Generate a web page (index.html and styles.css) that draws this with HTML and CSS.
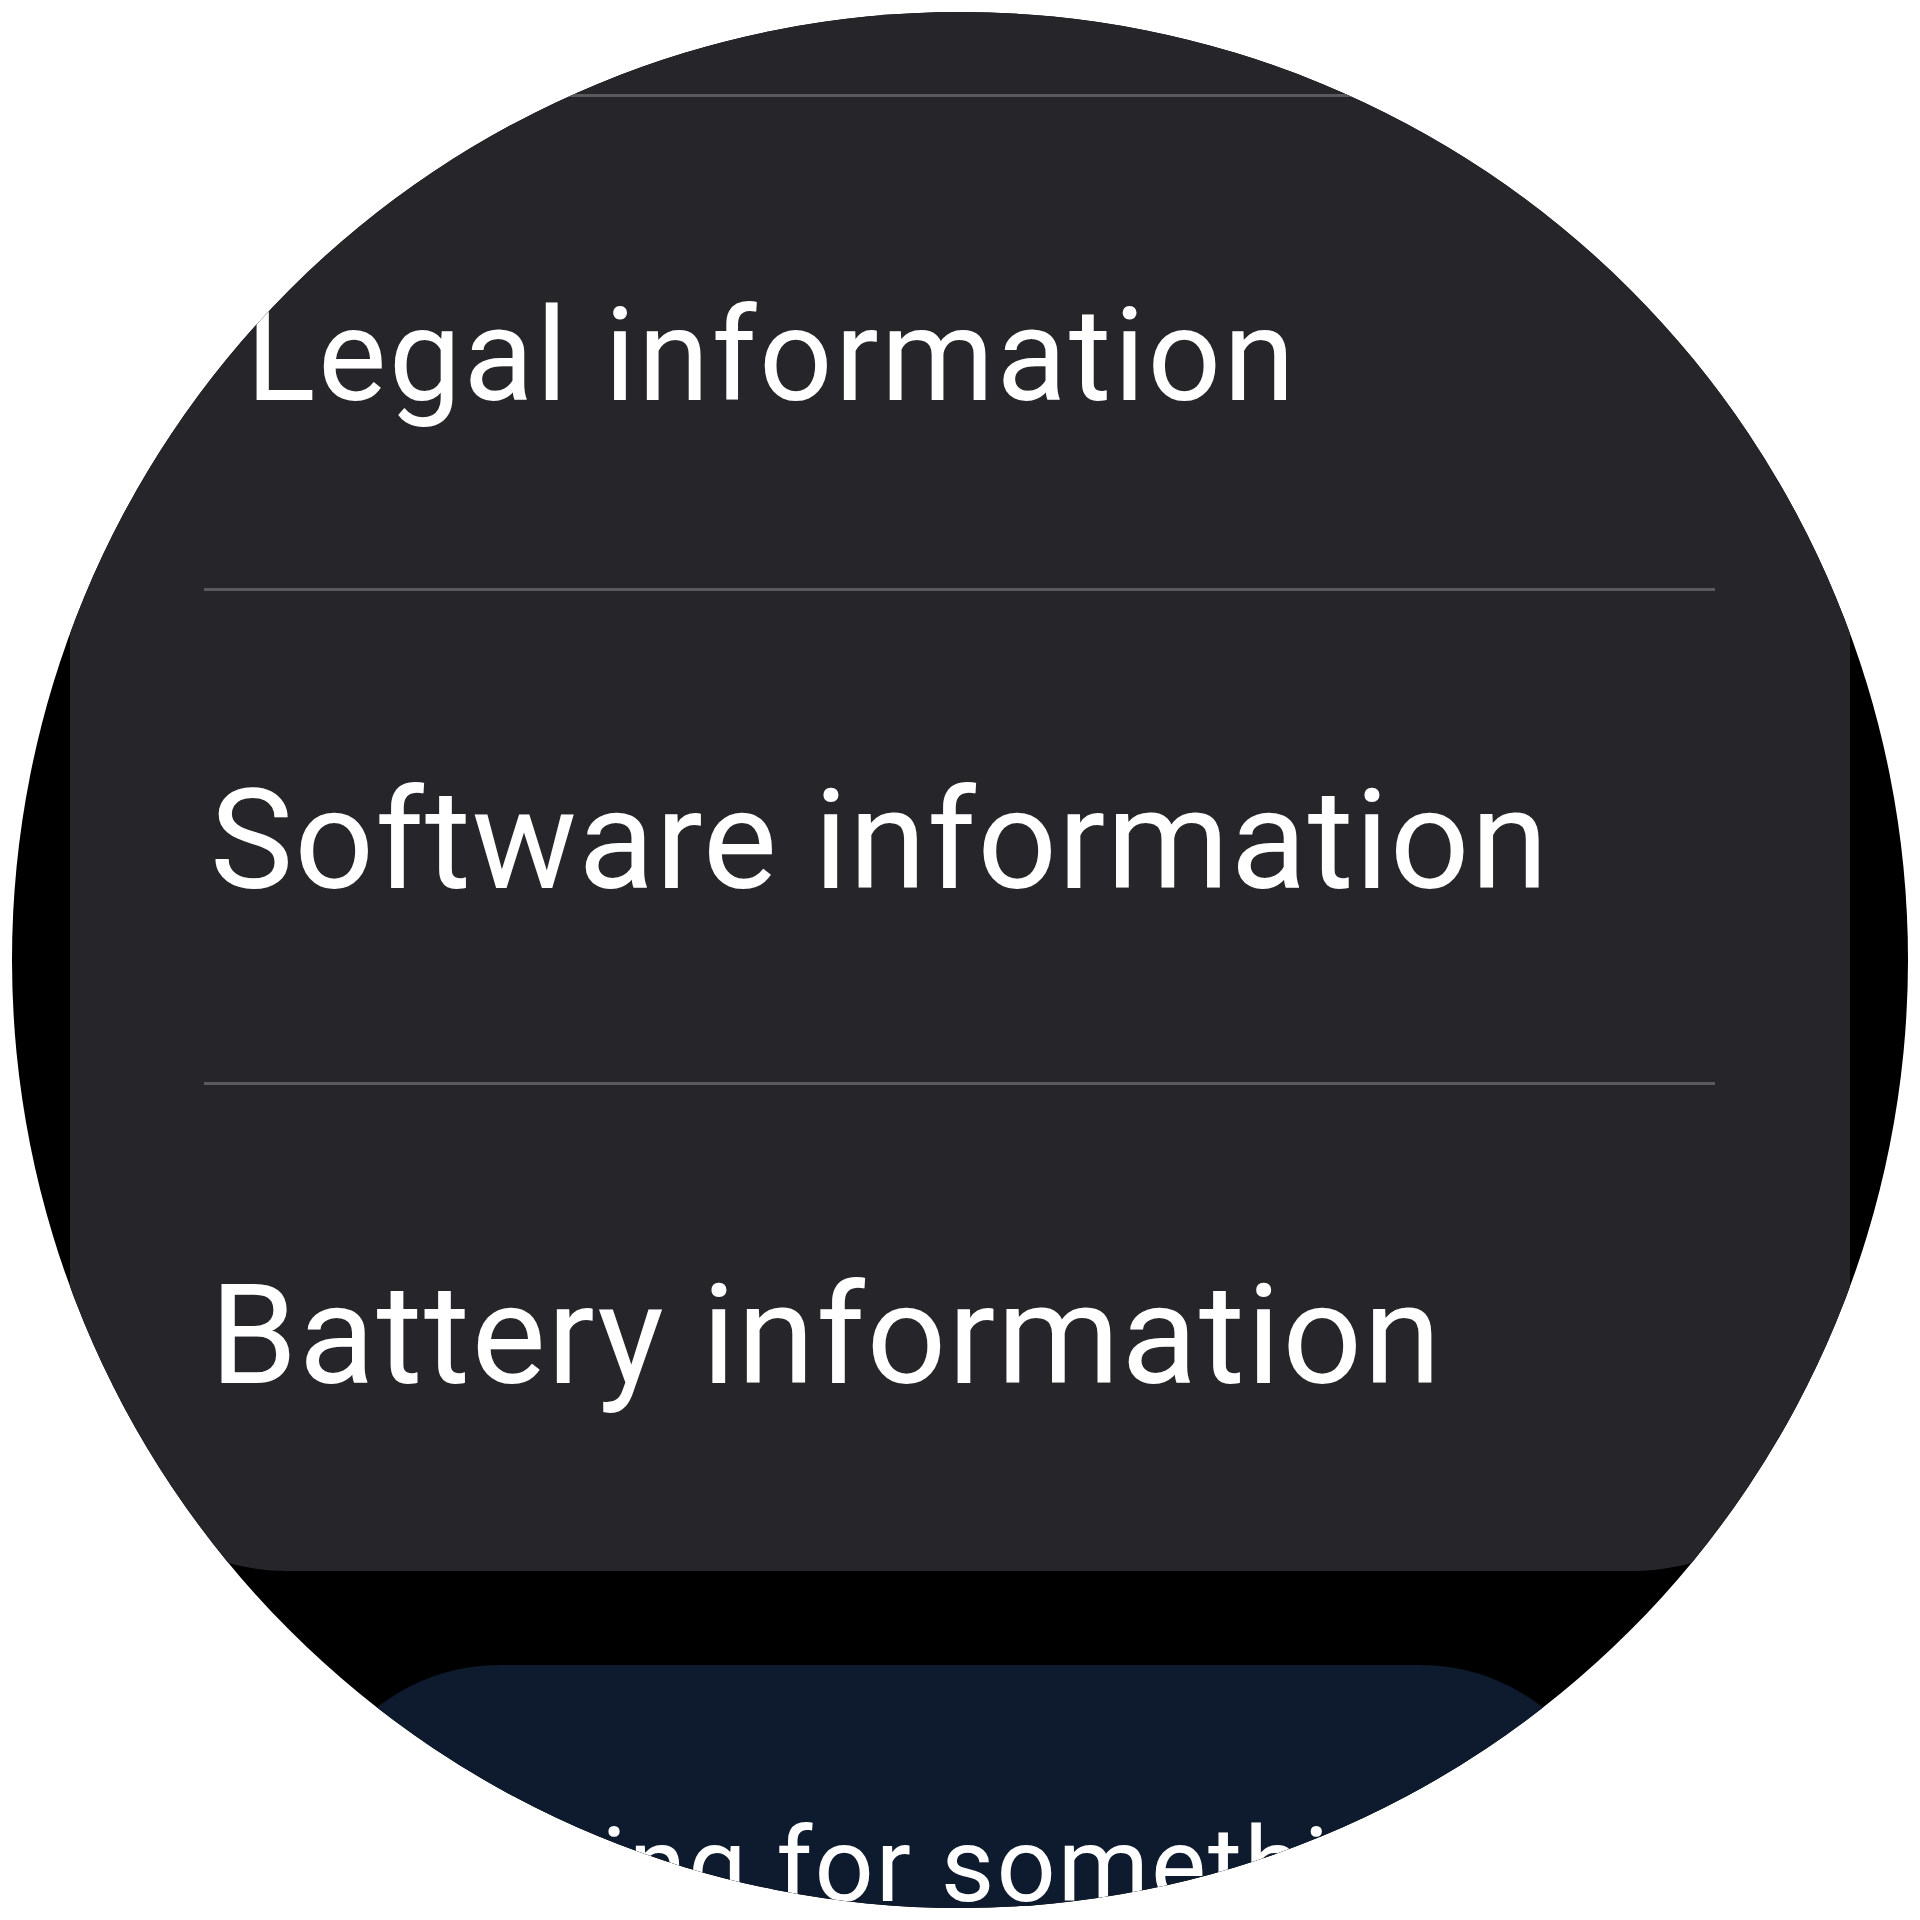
FILE: index.html
```html
<!DOCTYPE html>
<html lang="en">
<head>
<meta charset="utf-8">
<title>Watch settings</title>
<link rel="stylesheet" href="styles.css">
</head>
<body>
<div class="watch">
  <div class="screen">
    <section class="group">
      <div class="divider"></div>
      <div class="row row-edge"><span class="label">Legal information</span></div>
      <div class="divider"></div>
      <div class="row"><span class="label">Software information</span></div>
      <div class="divider"></div>
      <div class="row row-last"><span class="label">Battery information</span></div>
    </section>
    <section class="hint">
      <p class="hint-text">Looking for something else?</p>
    </section>
  </div>
</div>
</body>
</html>
```

FILE: styles.css
```css
html, body {
  margin: 0;
  padding: 0;
  background: #ffffff;
}

body {
  width: 1920px;
  height: 1920px;
  overflow: hidden;
  font-family: "Roboto", "Noto Sans", "DejaVu Sans", sans-serif;
  font-variant-ligatures: none;
}

.watch {
  width: 1896px;
  height: 1896px;
  margin: 12px;
  border-radius: 50%;
  background: #000000;
  overflow: hidden;
}

.screen {
  display: flex;
  flex-direction: column;
  height: 100%;
}

.group {
  margin-left: 58px;
  width: 1780px;
  background: #262529;
  border-radius: 0 0 217px 217px;
  padding-top: 82px;
  display: flex;
  flex-direction: column;
}

.divider {
  height: 3px;
  margin: 0 135px 0 134px;
  background: #5a595e;
}

.row {
  box-sizing: border-box;
  height: 491px;
  display: flex;
  align-items: center;
  padding-top: 6px;
  padding-left: 140px;
  color: #ffffff;
  font-size: 140px;
  line-height: 1;
  letter-spacing: 1.1px;
}

.row-edge {
  font-size: 129px;
  padding-left: 176px;
  padding-top: 26px;
  letter-spacing: 2.4px;
}

.row-last {
  height: 486px;
  padding-top: 14px;
  letter-spacing: 1.6px;
}

.label {
  white-space: nowrap;
}

.hint {
  margin-top: 94px;
  margin-left: 288px;
  width: 1320px;
  flex: 1;
  background: #0e1a2d;
  border-radius: 200px 200px 0 0;
}

.hint-text {
  margin: 149px 0 0 0;
  padding-left: 66px;
  color: #ffffff;
  font-size: 104px;
  line-height: 1;
  letter-spacing: 2px;
  white-space: nowrap;
}
```
